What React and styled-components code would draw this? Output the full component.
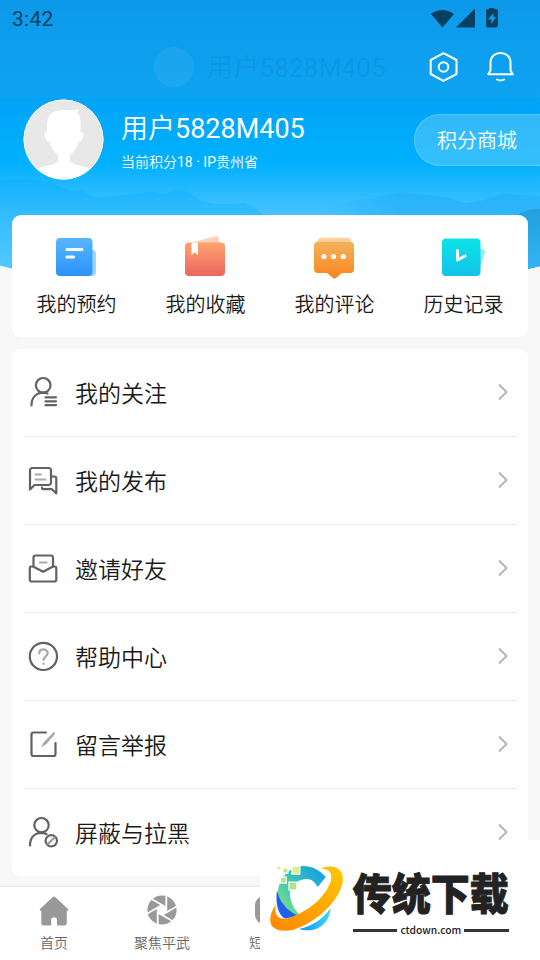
import styled, { createGlobalStyle, css } from 'styled-components';

const GlobalStyle = createGlobalStyle`
  * {
    box-sizing: border-box;
  }
  body {
    margin: 0;
    background: #f8f8f8;
    font-family: Roboto, 'Noto Sans CJK SC', sans-serif;
    color: #1a1a1a;
  }
  svg {
    display: block;
  }
`;

const cjkLight = css`
  font-family: 'Noto Sans CJK SC', sans-serif;
  font-weight: 350;
`;

const Page = styled.div`
  width: 540px;
  height: 960px;
  display: flex;
  flex-direction: column;
  position: relative;
  overflow: hidden;
`;

const Header = styled.header`
  height: 215px;
  flex: none;
  position: relative;
  color: #fff;
`;

const HeaderBg = styled.svg`
  position: absolute;
  top: 0;
  left: 0;
  z-index: -1;
`;

const TopArea = styled.div`
  height: 98px;
  background: linear-gradient(rgba(20, 120, 190, 0.16), rgba(70, 165, 220, 0.17));
`;

const StatusBar = styled.div`
  height: 38px;
  padding: 0 41px 0 12px;
  display: flex;
  align-items: center;
  justify-content: space-between;
  font-size: 21px;
  letter-spacing: 0.3px;
  line-height: 38px;
  color: #05405f;
`;

const TitleBar = styled.div`
  height: 60px;
  padding: 0 25px 2px 154px;
  display: flex;
  align-items: center;
`;

const FadedAvatar = styled.div`
  width: 40px;
  height: 40px;
  margin-right: 13px;
  border-radius: 50%;
  background: rgba(255, 255, 255, 0.06);
`;

const FadedName = styled.span`
  flex: 1;
  font-size: 26px;
  line-height: 38px;
  letter-spacing: 0.2px;
  color: rgba(0, 70, 130, 0.11);
  white-space: nowrap;
`;

const TopIcons = styled.div`
  display: flex;
  gap: 27px;
  margin-bottom: 1px;
`;

const Profile = styled.div`
  padding-left: 23px;
  height: 83px;
  display: flex;
  align-items: center;
`;

const UserInfo = styled.div`
  flex: 1;
  margin-left: 17px;
`;

const Han = styled.span`
  ${cjkLight}
`;

const Name = styled.div`
  font-size: 27px;
  line-height: 36px;
  height: 41px;
  margin-top: 2px;
`;

const Points = styled.div`
  font-size: 14px;
  line-height: 22px;
`;

const MallButton = styled.button`
  width: 126px;
  height: 52px;
  margin-top: 1px;
  padding: 0 0 0 22px;
  border: 1px solid rgba(255, 255, 255, 0.2);
  border-right: 0;
  border-radius: 26px 0 0 26px;
  background: rgba(255, 255, 255, 0.2);
  color: #fff;
  font-size: 20px;
  line-height: 48px;
  text-align: left;
  ${cjkLight}
`;

const Card = styled.section`
  margin: 0 12px 12px;
  border-radius: 9px;
  background: #fff;
  flex: none;
  position: relative;
`;

const Shortcuts = styled(Card)`
  height: 122px;
  display: grid;
  grid-template-columns: repeat(4, 1fr);
`;

const Shortcut = styled.div`
  padding-top: 20px;
  display: flex;
  flex-direction: column;
  align-items: center;
  font-size: 20px;
  line-height: 30px;
  gap: 9px;
  ${cjkLight}
  svg {
    margin-right: 1px;
  }
`;

const Menu = styled(Card)`
  padding: 0 11px 0 12px;
  margin-bottom: 11px;
`;

const MenuRow = styled.div`
  height: 88px;
  padding: 0 7.5px 2px 3px;
  display: flex;
  align-items: center;
  border-bottom: 1px solid #ececec;
  font-size: 23px;
  line-height: 34px;
  ${cjkLight}
  &:last-child {
    height: 87px;
    border-bottom: 0;
  }
`;

const MenuLabel = styled.span`
  flex: 1;
  margin-left: 16px;
`;

const Nav = styled.nav`
  flex: 1;
  display: flex;
  background: #fff;
  box-shadow: 0 -1px 3px rgba(0, 0, 0, 0.08);
`;

const NavItem = styled.div`
  width: 108px;
  flex: none;
  padding-top: 8px;
  display: flex;
  flex-direction: column;
  align-items: center;
  gap: 6px;
  font-size: 14px;
  line-height: 20px;
  color: #666;
  ${cjkLight}
`;

const Watermark = styled.div`
  width: 280px;
  height: 120px;
  padding: 23px 31px 0 9px;
  position: absolute;
  right: 0;
  bottom: 0;
  display: flex;
  gap: 6px;
  background: #fff;
`;

const Brand = styled.div`
  width: 157px;
  color: #222;
`;

const BrandName = styled.div`
  height: 60px;
  font: 900 39px/56px 'Noto Sans CJK SC', sans-serif;
  transform: scaleY(1.12);
  -webkit-text-stroke: 0.8px #222;
  white-space: nowrap;
`;

const BrandSite = styled.div`
  display: flex;
  align-items: center;
  gap: 3px;
  font: 500 10.3px/14px 'Noto Sans CJK SC', sans-serif;
  &::before,
  &::after {
    content: '';
    flex: 1;
    height: 3px;
    background: #333;
  }
`;

const Line = ({ children }) => (
  <svg
    width='32'
    height='32'
    viewBox='0 0 32 32'
    fill='none'
    stroke='#626262'
    strokeWidth='2.2'
    strokeLinecap='round'
    strokeLinejoin='round'
  >
    {children}
  </svg>
);

const menus = [
  {
    label: '我的关注',
    icon: (
      <Line>
        <circle cx='16.2' cy='9.3' r='7.3' />
        <path d='M4.5 29.5C4.5 21 9.5 17 16 16.7c1.8 0 3.3.3 4.5.9' />
        <path d='M18.5 21.3H29M18.5 25.3H29M18.5 29.2H29' />
      </Line>
    ),
  },
  {
    label: '我的发布',
    icon: (
      <Line>
        <path d='M3 25.5V6.5a2.5 2.5 0 0 1 2.5-2.5h16a2.5 2.5 0 0 1 2.5 2.5v12a2.5 2.5 0 0 1-2.5 2.5H7.5z' />
        <path d='M25 12.5h2.5q1.800 0 1.800 2V29.500l-4.300-4.300h-8q-2 0-2-1.500' />
        <path stroke='#aaa' d='M8.5 10.5h5.5M8.5 15.5h10' strokeWidth='1.8' />
      </Line>
    ),
  },
  {
    label: '邀请好友',
    icon: (
      <Line>
        <path d='M6.5 14.5V5.5a2 2 0 0 1 2-2h15.500a2 2 0 0 1 2 2v9' />
        <path d='M6 14.5H4a1.5 1.5 0 0 0-1.200 1.500v11.500a2 2 0 0 0 2 2h22.500a2 2 0 0 0 2-2V16a1.500 1.500 0 0 0-1.200-1.500H26l-9.800 5.200z' />
        <path stroke='#aaa' d='M13 10.5h6.5' />
      </Line>
    ),
  },
  {
    label: '帮助中心',
    icon: (
      <Line>
        <circle cx='16.4' cy='16.4' r='13.6' />
        <path
          stroke='#aaa'
          d='M12.2 13.5c0-5.500 8.500-5.200 8.500-.5 0 3.500-4.200 3.700-4.200 7M16.500 23.500v.5'
        />
      </Line>
    ),
  },
  {
    label: '留言举报',
    icon: (
      <Line>
        <path d='M19 4.5H6.5a2 2 0 0 0-2 2V26a2 2 0 0 0 2 2h20a2 2 0 0 0 2-2V15' />
        <path
          fill='#aaa'
          stroke='none'
          d='M26.5 4.300q1-.5 1.700.6.200 1-.6 1.600L19.500 16 14 19.500l2.500-5z'
        />
      </Line>
    ),
  },
  {
    label: '屏蔽与拉黑',
    icon: (
      <Line>
        <circle cx='14.5' cy='9.2' r='7.2' />
        <path d='M3 29.5C3 21.5 7.5 17 14.5 16.800c2 0 3.500.4 5 1.200' />
        <circle cx='24.3' cy='24.8' r='5.7' />
        <path stroke='#999' d='m21 28 6.5-6.5' />
      </Line>
    ),
  },
];

const shortcuts = [
  {
    label: '我的预约',
    icon: (
      <svg width='42' height='45' viewBox='0 0 42 45'>
        <defs>
          <linearGradient id='blue' x2='0' y2='1'>
            <stop stopColor='#59b6fd' />
            <stop offset='1' stopColor='#2b93f8' />
          </linearGradient>
        </defs>
        <rect x='28' y='15' width='13' height='26' rx='4' fill='#9ad5fd' />
        <rect x='1' y='3' width='36.5' height='38' rx='4' fill='url(#blue)' />
        <path d='M12 14.5h15M12 22h6.5' stroke='#fff' strokeWidth='3' strokeLinecap='round' />
      </svg>
    ),
  },
  {
    label: '我的收藏',
    icon: (
      <svg width='42' height='45' viewBox='0 0 42 45'>
        <defs>
          <linearGradient id='red' x2='0' y2='1'>
            <stop stopColor='#ffa36d' />
            <stop offset='1' stopColor='#ed665f' />
          </linearGradient>
        </defs>
        <path d='M5 8 32 1.200q2-.5 2.500 1.500L37 12H5z' fill='#ffcfb6' />
        <rect x='1' y='7.5' width='40' height='33.5' rx='4' fill='url(#red)' />
        <path d='M7.5 7.5h6.5v12.7l-3.250-3-3.250 3z' fill='#fff' />
      </svg>
    ),
  },
  {
    label: '我的评论',
    icon: (
      <svg width='42' height='45' viewBox='0 0 42 45'>
        <defs>
          <linearGradient id='orange' x2='0' y2='1'>
            <stop stopColor='#f3b35b' />
            <stop offset='1' stopColor='#fb8421' />
          </linearGradient>
        </defs>
        <path d='M8 2.800h27q2 0 3 4v5H4V7q2-4.200 4-4.200z' fill='#fbd09b' />
        <path
          d='M5 6.800h32a4 4 0 0 1 4 4V34a4 4 0 0 1-4 4h-8l-6 5q-1.500 1.200-3 0l-6-5H5a4 4 0 0 1-4-4V10.800a4 4 0 0 1 4-4z'
          fill='url(#orange)'
        />
        <g fill='#fff'>
          <circle cx='11' cy='21.5' r='2.6' />
          <circle cx='20.5' cy='21.5' r='2.6' />
          <circle cx='30.3' cy='21.5' r='2.6' />
        </g>
      </svg>
    ),
  },
  {
    label: '历史记录',
    icon: (
      <svg width='42' height='45' viewBox='0 0 42 45' overflow='visible'>
        <defs>
          <linearGradient id='cyan' x2='0' y2='1'>
            <stop stopColor='#0ce3e5' />
            <stop offset='1' stopColor='#14c3ea' />
          </linearGradient>
        </defs>
        <path d='m36 13 5.500 1.500q2 .5 1.500 2.500L37 38z' fill='#90f0ef' />
        <rect x='0' y='3.5' width='38.5' height='37.5' rx='4' fill='url(#cyan)' />
        <path
          d='M15.5 15.5V25l7.5-4'
          fill='none'
          stroke='#fff'
          strokeWidth='3'
          strokeLinecap='round'
          strokeLinejoin='round'
        />
      </svg>
    ),
  },
];

const tabs = [
  {
    label: '首页',
    icon: (
      <svg width='30' height='31' viewBox='0 0 30 31'>
        <path
          fill='#999'
          d='M13.5 2.200q1.500-1.200 3 0L29 14q1 1.500-.5 1.800h-.7v12q0 2.700-2.700 2.700H18v-6q0-2-1.500-2h-2.300q-2 0-2 2v6H5q-2.700 0-2.700-2.700v-12h-.8Q0 15.500 1 14z'
        />
      </svg>
    ),
  },
  {
    label: '聚焦平武',
    icon: (
      <svg width='30' height='31' viewBox='0 0 30 31'>
        <circle cx='15' cy='15' r='14.6' fill='#999' />
        <path fill='#fff' d='m15 9.500 4.800 2.700v5.600L15 20.500l-4.800-2.700v-5.600z' />
        <g stroke='#fff' strokeWidth='1.8'>
          {[0, 60, 120, 180, 240, 300].map((a) => (
            <path key={a} d='M19.3 18V-1' transform={`rotate(${a} 15 15)`} />
          ))}
        </g>
      </svg>
    ),
  },
  {
    label: '短视频',
    icon: (
      <svg width='30' height='31' viewBox='0 0 30 31'>
        <rect y='1' width='30' height='28' rx='9' fill='#999' />
      </svg>
    ),
  },
];

const Landscape = () => (
  <HeaderBg width='540' height='290' viewBox='0 0 540 290'>
    <defs>
      <linearGradient id='sky' gradientUnits='userSpaceOnUse' x1='0' y1='0' x2='0' y2='290'>
        <stop stopColor='#0c9ff2' />
        <stop offset='0.35' stopColor='#02a4f7' />
        <stop offset='0.56' stopColor='#00b0fd' />
        <stop offset='0.74' stopColor='#48c3ff' />
        <stop offset='1' stopColor='#55caff' />
      </linearGradient>
      <linearGradient id='hill' gradientUnits='userSpaceOnUse' x1='0' y1='180' x2='0' y2='265'>
        <stop stopColor='#0fb1fb' />
        <stop offset='1' stopColor='#50c7ff' />
      </linearGradient>
      <linearGradient id='range' gradientUnits='userSpaceOnUse' x1='320' y1='0' x2='400' y2='0'>
        <stop stopColor='#28b2f9' stopOpacity='0' />
        <stop offset='1' stopColor='#28b2f9' />
      </linearGradient>
      <linearGradient id='near' x2='0' y2='1'>
        <stop stopColor='#239fdd' />
        <stop offset='1' stopColor='#36bcfd' />
      </linearGradient>
      <clipPath id='edge'>
        <path d='M0 0H540V266Q270 336 0 265.5z' />
      </clipPath>
    </defs>
    <g clipPath='url(#edge)'>
      <path d='M0 0h540v290H0z' fill='url(#sky)' />
      <path
        d='M0 180l22-1 28 3 12 6 10 3 8-1 8 4 6 3 18-1 18-1 13-2 7-2 12 3 6-1 6-3q8-2 16 3l12 8 13 3h16l14-1 8 4 11 8v75H0z'
        fill='url(#hill)'
        opacity='0.7'
      />
      <path
        d='M318 208l18-1 16-6 11-2 10 0 10-4 10-1 9-2 12 2 10 1 14 1 10 1 16 6 10-1 10-2 13-5 10-2 8 2 25 1v80H290z'
        fill='url(#range)'
        opacity='0.8'
      />
      <path d='M515 216l5-3 8-3 12-1v80h-25z' fill='url(#near)' />
    </g>
  </HeaderBg>
);

const BrandLogo = () => (
  <svg width='78' height='75' viewBox='0 0 78 75'>
    <defs>
      <linearGradient id='ring' x1='0' y1='1' x2='1' y2='0'>
        <stop stopColor='#ff8500' />
        <stop offset='1' stopColor='#ffc900' />
      </linearGradient>
      <linearGradient id='arc' x1='0' y1='1' x2='1' y2='0'>
        <stop stopColor='#8be77f' />
        <stop offset='0.45' stopColor='#42c8ae' />
        <stop offset='1' stopColor='#079af0' />
      </linearGradient>
      <linearGradient id='tail' x2='1'>
        <stop stopColor='#168df8' />
        <stop offset='1' stopColor='#35dcf7' />
      </linearGradient>
    </defs>
    <path
      d='M57 14C46 1 30 0 20 8 8 18 6 34 12 48l10 8 10-3C24 46 21 37 21 30c2-9 9-14 17-14 6 0 8 4 11 8z'
      fill='url(#arc)'
    />
    <path d='M8 27C6 42 10 52 15 55q7 1 13-3C18 48 10 38 8 27z' fill='#1f60ec' />
    <path d='M30 66q20-4 32-21-2 18-18 22-8 1-14-1z' fill='url(#tail)' />
    <path
      d='M52 5C67 0 78 7 73 23 67 42 45 61 24 67 2 71-5 60 7 41c-3 14 5 18 18 12C42 47 58 32 62 18c2-8-1-12-10-13z'
      fill='url(#ring)'
    />
    <g stroke='#fff' strokeWidth='1.2'>
      <rect x='8' y='3' width='4' height='4' fill='#dced8e' />
      <rect x='14' y='5' width='5' height='5' fill='#b9e886' />
      <rect x='23' y='3' width='8' height='8' fill='#dced8e' />
      <rect x='11.5' y='14' width='6' height='6' fill='#b1e686' />
      <rect x='20' y='19' width='8' height='8' fill='#b1e686' />
    </g>
  </svg>
);

const App = () => {
  return (
    <Page>
      <GlobalStyle />
      <Landscape />
      <Header>
        <TopArea>
          <StatusBar>
            <span>3:42</span>
            <svg width='68' height='22' viewBox='0 0 68 22' fill='#05405f'>
              <path d='M0 6Q11-2 23 6L11.5 19.5z' />
              <path d='M25 19.5 44 .5v19z' />
              <path d='M58-.5h5V1h2q2 0 2 2v14.500q0 2-2 2H56.500q-1.500 0-1.500-2V3q0-2 2-2h1z' />
              <path d='m62.500 4.500-5.500 7h3.300v4.500l4.700-7h-3z' fill='#0d9cee' />
            </svg>
          </StatusBar>
          <TitleBar>
            <FadedAvatar />
            <FadedName>
              <Han>用户</Han>5828M405
            </FadedName>
            <TopIcons>
              <svg width='30' height='32' viewBox='0 0 30 32' fill='none' stroke='#fff' strokeWidth='2'>
                <path d='M15.5 2.200 28.500 9v14L15.500 29.800 2.700 23V9z' strokeLinejoin='round' />
                <circle cx='15.5' cy='16' r='4.8' />
              </svg>
              <svg
                width='30'
                height='32'
                viewBox='0 0 30 32'
                fill='none'
                stroke='#fff'
                strokeWidth='2'
                strokeLinecap='round'
                strokeLinejoin='round'
              >
                <path d='M5.5 19.500v-8C5.500 5.500 10 2 15.500 2s10 3.500 10 9.500v8l2.200 3.800H3.300z' />
                <path d='M12 28.500q3.500 2 7 0' />
              </svg>
            </TopIcons>
          </TitleBar>
        </TopArea>
        <Profile>
          <svg width='81' height='81' viewBox='0 0 81 81'>
            <defs>
              <clipPath id='face'>
                <circle cx='40.5' cy='40.5' r='40' />
              </clipPath>
            </defs>
            <g clipPath='url(#face)'>
              <rect width='81' height='81' fill='#e8e8e8' />
              <path
                fill='#fff'
                d='M24 33C23 16 27 11 43 11C48 11 53 12 55 9C55 11 55 13 54 14C58 17 58 22 57.5 33C61 33 61 36 60 38C59 41 58 43 56 42.5C54 49 52 52 47 56V62C50 66 56 66 62 68L75 72V85H6V72L19 68C26 66 32 66 35 62V56C30 52 28 49 26.5 42.5C24 43 23 41 22 38C21 36 21 33 24 33Z'
              />
            </g>
            <circle cx='40.5' cy='40.5' r='39.5' fill='none' stroke='#f5f5f5' />
          </svg>
          <UserInfo>
            <Name>
              <Han>用户</Han>5828M405
            </Name>
            <Points>
              <Han>当前积分</Han>18 · IP<Han>贵州省</Han>
            </Points>
          </UserInfo>
          <MallButton>积分商城</MallButton>
        </Profile>
      </Header>
      <Shortcuts>
        {shortcuts.map(({ label, icon }) => (
          <Shortcut key={label}>
            {icon}
            {label}
          </Shortcut>
        ))}
      </Shortcuts>
      <Menu>
        {menus.map(({ label, icon }) => (
          <MenuRow key={label}>
            {icon}
            <MenuLabel>{label}</MenuLabel>
            <svg width='14' height='20' viewBox='0 0 14 20' fill='none' stroke='#b5b5b5' strokeWidth='2'>
              <path d='m3 2.500 7.500 7.500L3 17.500' />
            </svg>
          </MenuRow>
        ))}
      </Menu>
      <Nav>
        {tabs.map(({ label, icon }) => (
          <NavItem key={label}>
            {icon}
            {label}
          </NavItem>
        ))}
      </Nav>
      <Watermark>
        <BrandLogo />
        <Brand>
          <BrandName>传统下载</BrandName>
          <BrandSite>ctdown.com</BrandSite>
        </Brand>
      </Watermark>
    </Page>
  );
};

export default App;
